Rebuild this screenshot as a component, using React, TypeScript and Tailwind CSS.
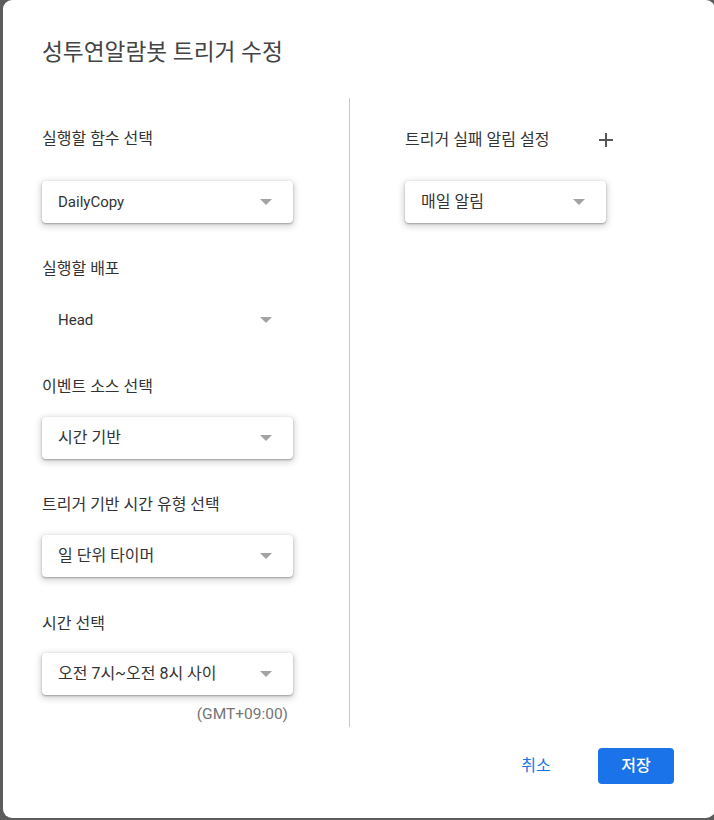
import React from 'react'

const font = { fontFamily: 'Roboto, "Noto Sans CJK KR", sans-serif' }

interface SelectBoxProps {
  value: string
  width: string
  flat?: boolean
  latin?: boolean
}

const Arrow = () => (
  <span className="h-0 w-0 border-x-[6px] border-t-[6px] border-x-transparent border-t-[#a3a3a3]" />
)

const SelectBox: React.FC<SelectBoxProps> = ({ value, width, flat, latin }) => (
  <div
    className={`${width} flex h-[42px] items-center justify-between pl-4 pr-[21px] text-[#333] ${
      latin ? 'text-[15px]' : 'text-[16px]'
    } ${flat ? '' : 'rounded-[4px] bg-white shadow-[0_1px_2px_rgba(0,0,0,0.3),0_2px_6px_2px_rgba(0,0,0,0.15)]'}`}
  >
    <span>{value}</span>
    <Arrow />
  </div>
)

const Label: React.FC<{ text: string; className?: string }> = ({ text, className }) => (
  <div className={`h-5 text-[16px] leading-5 text-[#333] ${className ?? ''}`}>{text}</div>
)

const App: React.FC = () => {
  return (
    <div className="flex h-[820px] w-[714px] overflow-hidden bg-[#5c5c5c] pl-[3px]" style={font}>
      <div className="flex h-[818px] w-[712px] shrink-0 flex-col rounded-[9px] bg-white">
        <h1 className="mt-[38px] pl-[39px] text-[22.7px] leading-[30px] font-normal text-[#444]">
          성투연알람봇 트리거 수정
        </h1>

        <div className="mt-[30px] flex h-[629px]">
          <div className="w-[346px] shrink-0 pl-[39px]">
            <Label text="실행할 함수 선택" className="mt-[31px]" />
            <div className="mt-[32px]">
              <SelectBox value="DailyCopy" width="w-[251px]" latin />
            </div>

            <Label text="실행할 배포" className="mt-[36px]" />
            <div className="mt-[20px]">
              <SelectBox value="Head" width="w-[251px]" flat latin />
            </div>

            <Label text="이벤트 소스 선택" className="mt-[36px]" />
            <div className="mt-[20px]">
              <SelectBox value="시간 기반" width="w-[251px]" />
            </div>

            <Label text="트리거 기반 시간 유형 선택" className="mt-[36px]" />
            <div className="mt-[20px]">
              <SelectBox value="일 단위 타이머" width="w-[251px]" />
            </div>

            <Label text="시간 선택" className="mt-[37px]" />
            <div className="mt-[19px]">
              <SelectBox value="오전 7시~오전 8시 사이" width="w-[251px]" />
            </div>
            <div className="mt-[9px] h-5 w-[251px] pr-[5px] text-right text-[15.5px] leading-5 text-[#757575]">
              (GMT+09:00)
            </div>
          </div>

          <div className="w-px shrink-0 bg-[#c8c8c8]" />

          <div className="pl-[55px]">
            <div className="mt-[32px] flex w-[208px] items-center justify-between">
              <Label text="트리거 실패 알림 설정" />
              <svg width="14" height="14" viewBox="0 0 14 14" className="text-[#555]">
                <path d="M7 0v14M0 7h14" stroke="currentColor" strokeWidth="2" />
              </svg>
            </div>
            <div className="mt-[31px]">
              <SelectBox value="매일 알림" width="w-[201px]" />
            </div>
          </div>
        </div>

        <div className="mt-[21px] flex justify-end pr-[41px]">
          <button className="mr-6 h-9 w-[76px] text-[16px] text-[#1a73e8]">취소</button>
          <button className="h-9 w-[76px] rounded-[4px] bg-[#1a73e8] text-[16px] font-medium text-white">
            저장
          </button>
        </div>
      </div>
    </div>
  )
}

export default App
